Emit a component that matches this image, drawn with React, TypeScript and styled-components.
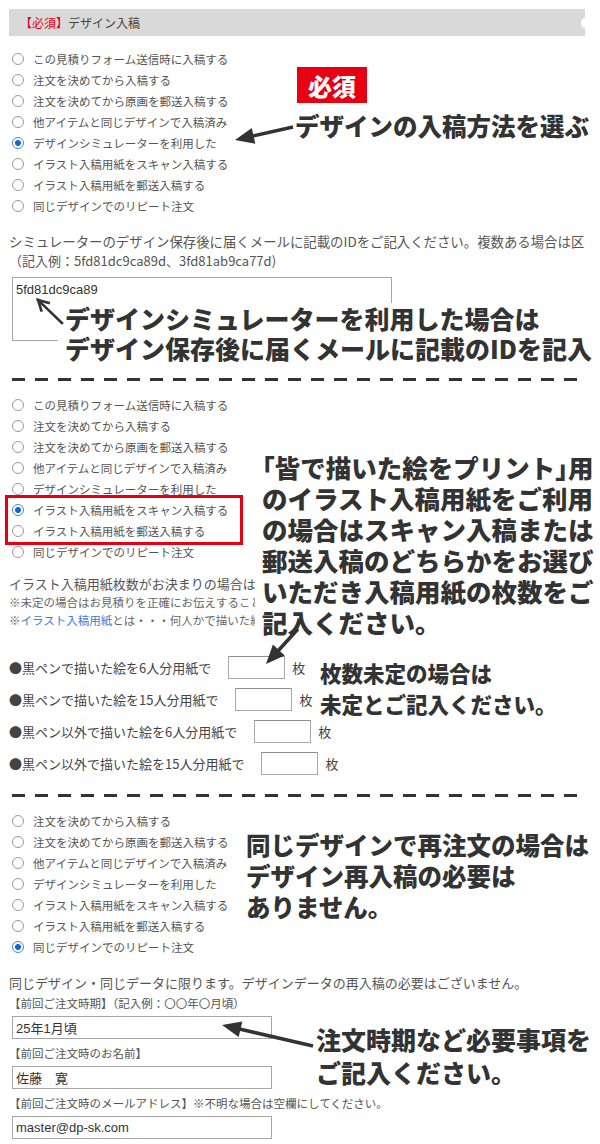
import React from 'react';
import styled, { createGlobalStyle } from 'styled-components';

const jp = `"Noto Sans CJK JP", "Noto Sans", sans-serif`;
const latin = `"Liberation Sans", "Noto Sans CJK JP", sans-serif`;

const GlobalStyle = createGlobalStyle`
  html, body {
    margin: 0;
    padding: 0;
    background: #fff;
  }

  body {
    font-family: ${jp};
  }
`;

const Page = styled.div`
  position: relative;
  width: 600px;
  height: 1144px;
  overflow: hidden;
  box-sizing: border-box;
  padding-left: 9px;
  color: #555;
  font-family: ${jp};
`;

// grey ribbon title with the notched right end
const SectionHeader = styled.div`
  position: relative;
  margin-top: 9px;
  width: 576px;
  height: 27px;
  box-sizing: border-box;
  padding-left: 11px;
  display: flex;
  align-items: center;
  background: #d9d9d9;
  font-size: 12px;
  color: #444;

  &::after {
    content: '';
    position: absolute;
    right: -4px;
    top: 9px;
    width: 8px;
    height: 10px;
    border-radius: 50%;
    background: #fff;
  }
`;

const Required = styled.span`
  color: #e60012;
`;

const RadioList = styled.div<{ $gap: number }>`
  margin-top: ${({ $gap }) => $gap}px;
  display: flex;
  flex-direction: column;
`;

const RadioRow = styled.div`
  display: flex;
  align-items: center;
  height: 21px;
  font-size: 11.5px;
  color: #555;
  white-space: nowrap;
`;

const RadioMark = styled.span<{ $checked?: boolean }>`
  flex: none;
  width: 12px;
  height: 12px;
  box-sizing: border-box;
  margin: 0 9px 0 3px;
  border-radius: 50%;
  border: 1px solid ${({ $checked }) => ($checked ? '#4a86d0' : '#9a9a9a')};
  background: ${({ $checked }) => ($checked
    ? 'radial-gradient(circle, #1466d6 0 2.6px, #fff 3.3px)'
    : '#fff')};
`;

const Highlight = styled.div`
  width: 238px;
  box-sizing: border-box;
  margin: -4px 0 -4px -4px;
  padding: 1px 0 1px 1px;
  border: 3px solid #e50012;
`;

const Divider = styled.div<{ $gap: number }>`
  margin-top: ${({ $gap }) => $gap}px;
  margin-left: 3px;
  width: 573px;
  height: 3px;
  background: repeating-linear-gradient(to right, #333 0 13px, transparent 13px 23px);
`;

const Note = styled.div<{ $gap?: number; $size?: number }>`
  margin-top: ${({ $gap = 0 }) => $gap}px;
  font-size: ${({ $size = 13 }) => $size}px;
  line-height: 19px;
  color: #555;
  white-space: nowrap;
`;

// the lines that run under the big note on the right
const ClippedNotes = styled.div`
  margin-top: 12px;
  width: 246px;
  overflow: hidden;
`;

const SmallNote = styled.div`
  font-size: 11.5px;
  line-height: 18px;
  color: #666;
  white-space: nowrap;
`;

const Link = styled.span`
  color: #3b7dd8;
`;

const IdBox = styled.textarea`
  display: block;
  margin: 7px 0 0 3px;
  width: 380px;
  height: 64px;
  box-sizing: border-box;
  padding: 4px 3px;
  border: 1px solid #a6a6a6;
  resize: none;
  font-family: ${latin};
  font-size: 13px;
  line-height: 16px;
  color: #333;
  outline: none;
`;

const CountList = styled.div`
  margin-top: 22px;
  display: flex;
  flex-direction: column;
`;

const CountRow = styled.div`
  display: flex;
  align-items: center;
  height: 32px;
  font-size: 13px;
  color: #444;
  white-space: nowrap;
`;

const CountInput = styled.input`
  width: 57px;
  height: 23px;
  box-sizing: border-box;
  margin: 0 7px 0 17px;
  border: 1px solid #a9a9a9;
  border-top-color: #8f8f8f;
  padding: 0 3px;
  font-family: ${latin};
  font-size: 13px;
  outline: none;
`;

const FieldLabel = styled.div<{ $gap: number }>`
  margin-top: ${({ $gap }) => $gap}px;
  font-size: 11.5px;
  line-height: 18px;
  color: #555;
  white-space: nowrap;
`;

const TextField = styled.input`
  display: block;
  margin: 4px 0 0 3px;
  width: 260px;
  height: 23px;
  box-sizing: border-box;
  padding: 0 3px;
  border: 1px solid #a6a6a6;
  font-family: ${latin};
  font-size: 13px;
  color: #333;
  outline: none;
`;

// big bold notes laid over the form
const Callout = styled.div<{ $x: number; $y: number; $size: number; $line: number }>`
  position: absolute;
  left: ${({ $x }) => $x}px;
  top: ${({ $y }) => $y}px;
  font-family: ${jp};
  font-weight: 900;
  font-size: ${({ $size }) => $size}px;
  line-height: ${({ $line }) => $line}px;
  color: #333;
  white-space: nowrap;
  background: #fff;
`;

const CoverCallout = styled(Callout)`
  right: 0;
  padding-left: 7px;
`;

// corner brackets set half width
const Bracket = styled.span`
  font-feature-settings: "halt";
`;

const Badge = styled.div`
  position: absolute;
  left: 297px;
  top: 67px;
  width: 70px;
  height: 36px;
  display: flex;
  align-items: center;
  justify-content: center;
  background: #e60012;
  color: #fff;
  font-family: ${jp};
  font-weight: 900;
  font-size: 24px;
`;

const ArrowLayer = styled.svg`
  position: absolute;
  left: 0;
  top: 0;
  width: 600px;
  height: 1144px;
  pointer-events: none;
`;

const options = [
  'この見積りフォーム送信時に入稿する',
  '注文を決めてから入稿する',
  '注文を決めてから原画を郵送入稿する',
  '他アイテムと同じデザインで入稿済み',
  'デザインシミュレーターを利用した',
  'イラスト入稿用紙をスキャン入稿する',
  'イラスト入稿用紙を郵送入稿する',
  '同じデザインでのリピート注文',
];

const Radio = ({ label, checked }: { label: string; checked?: boolean }) => (
  <RadioRow>
    <RadioMark $checked={checked} />
    {label}
  </RadioRow>
);

const counts = [
  '●黒ペンで描いた絵を6人分用紙で',
  '●黒ペンで描いた絵を15人分用紙で',
  '●黒ペン以外で描いた絵を6人分用紙で',
  '●黒ペン以外で描いた絵を15人分用紙で',
];

type Pt = [number, number];

// filled arrow: shaft plus triangular head ending at tip
const SolidArrow = ({ from, to }: { from: Pt; to: Pt }) => {
  const dx = to[0] - from[0];
  const dy = to[1] - from[1];
  const len = Math.hypot(dx, dy);
  const ux = dx / len;
  const uy = dy / len;
  const headLen = 19;
  const half = 8;
  const bx = to[0] - ux * headLen;
  const by = to[1] - uy * headLen;
  const pts = [
    `${to[0]},${to[1]}`,
    `${bx - uy * half},${by + ux * half}`,
    `${bx + uy * half},${by - ux * half}`,
  ].join(' ');

  return (
    <g>
      <line x1={from[0]} y1={from[1]} x2={bx + ux * 2} y2={by + uy * 2} stroke="#333" strokeWidth={3.5} />
      <polygon points={pts} fill="#333" />
    </g>
  );
};

// thin arrow with an open V head
const LineArrow = ({ from, to }: { from: Pt; to: Pt }) => {
  const dx = to[0] - from[0];
  const dy = to[1] - from[1];
  const len = Math.hypot(dx, dy);
  const ux = dx / len;
  const uy = dy / len;
  const arm = 11;
  const spread = 0.5;
  const a1: Pt = [
    to[0] - arm * (ux * Math.cos(spread) - uy * Math.sin(spread)),
    to[1] - arm * (uy * Math.cos(spread) + ux * Math.sin(spread)),
  ];
  const a2: Pt = [
    to[0] - arm * (ux * Math.cos(spread) + uy * Math.sin(spread)),
    to[1] - arm * (uy * Math.cos(spread) - ux * Math.sin(spread)),
  ];

  return (
    <g stroke="#333" strokeWidth={2.6} fill="none" strokeLinecap="square">
      <line x1={from[0]} y1={from[1]} x2={to[0]} y2={to[1]} />
      <polyline points={`${a1[0]},${a1[1]} ${to[0]},${to[1]} ${a2[0]},${a2[1]}`} />
    </g>
  );
};

export default function App() {
  return (
    <Page>
      <GlobalStyle />

      <SectionHeader>
        <Required>【必須】</Required>デザイン入稿
      </SectionHeader>

      <RadioList $gap={12}>
        {options.map((o, i) => <Radio key={o} label={o} checked={i === 4} />)}
      </RadioList>

      <Note $gap={16} $size={13.4}>
        シミュレーターのデザイン保存後に届くメールに記載のIDをご記入ください。複数ある場合は区
      </Note>
      <Note>（記入例：5fd81dc9ca89d、3fd81ab9ca77d)</Note>
      <IdBox defaultValue="5fd81dc9ca89" readOnly />

      <Divider $gap={37} />

      <RadioList $gap={13}>
        {options.slice(0, 5).map((o) => <Radio key={o} label={o} />)}
        <Highlight>
          <Radio label={options[5]} checked />
          <Radio label={options[6]} />
        </Highlight>
        <Radio label={options[7]} />
      </RadioList>

      <ClippedNotes>
        <Note>イラスト入稿用紙枚数がお決まりの場合は</Note>
        <SmallNote>※未定の場合はお見積りを正確にお伝えすることが</SmallNote>
        <SmallNote>
          ※<Link>イラスト入稿用紙</Link>とは・・・何人かで描いた絵を
        </SmallNote>
      </ClippedNotes>

      <CountList>
        {counts.map((c) => (
          <CountRow key={c}>
            {c}
            <CountInput readOnly />
            枚
          </CountRow>
        ))}
      </CountList>

      <Divider $gap={15} />

      <RadioList $gap={13}>
        {options.slice(1).map((o, i) => <Radio key={o} label={o} checked={i === 6} />)}
      </RadioList>

      <Note $gap={16}>同じデザイン・同じデータに限ります。デザインデータの再入稿の必要はございません。</Note>
      <FieldLabel $gap={2}>【前回ご注文時期】（記入例：〇〇年〇月頃）</FieldLabel>
      <TextField defaultValue="25年1月頃" readOnly />
      <FieldLabel $gap={5}>【前回ご注文時のお名前】</FieldLabel>
      <TextField defaultValue="佐藤　寛" readOnly />
      <FieldLabel $gap={5}>【前回ご注文時のメールアドレス】※不明な場合は空欄にしてください。</FieldLabel>
      <TextField defaultValue="master@dp-sk.com" readOnly />

      <Badge>必須</Badge>
      <Callout $x={295} $y={111} $size={24.5} $line={30}>デザインの入稿方法を選ぶ</Callout>

      <CoverCallout $x={58} $y={303} $size={25} $line={30}>
        デザインシミュレーターを利用した場合は<br />
        デザイン保存後に届くメールに記載のIDを記入
      </CoverCallout>

      <CoverCallout $x={255} $y={451} $size={25.5} $line={31}>
        <Bracket>「</Bracket>皆で描いた絵をプリント<Bracket>」</Bracket>用<br />
        のイラスト入稿用紙をご利用<br />
        の場合はスキャン入稿または<br />
        郵送入稿のどちらかをお選び<br />
        いただき入稿用紙の枚数をご<br />
        記入ください。
      </CoverCallout>

      <Callout $x={320} $y={657} $size={21.5} $line={31}>
        枚数未定の場合は<br />
        未定とご記入ください。
      </Callout>

      <Callout $x={246} $y={829} $size={24.5} $line={31}>
        同じデザインで再注文の場合は<br />
        デザイン再入稿の必要は<br />
        ありません。
      </Callout>

      <Callout $x={316} $y={1023} $size={25} $line={33}>
        注文時期など必要事項を<br />
        ご記入ください。
      </Callout>

      <ArrowLayer viewBox="0 0 600 1144">
        <SolidArrow from={[293, 127]} to={[235, 140]} />
        <LineArrow from={[62, 323]} to={[38, 300]} />
        <SolidArrow from={[298, 629]} to={[266, 664]} />
        <SolidArrow from={[313, 1046]} to={[222, 1025]} />
      </ArrowLayer>
    </Page>
  );
}
